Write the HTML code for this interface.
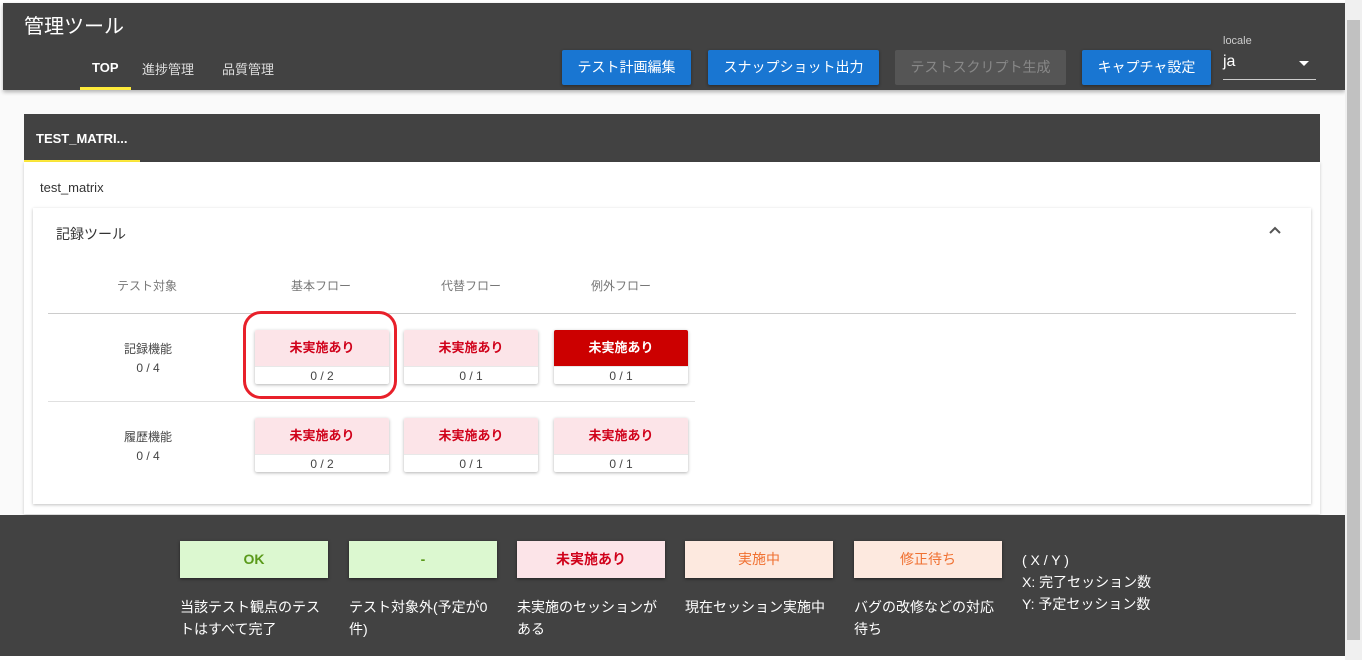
<!DOCTYPE html>
<html><head><meta charset="utf-8"><style>
*{box-sizing:border-box;margin:0;padding:0}
body{width:1362px;height:660px;overflow:hidden;background:#fff;font-family:"Liberation Sans","Noto Sans CJK JP",sans-serif;position:relative}
.a{position:absolute}
.hdr{left:3px;top:3px;width:1342px;height:87px;background:#424242;box-shadow:0 2px 4px rgba(0,0,0,.3)}
.btn{position:absolute;top:50px;height:35px;background:#1976d2;color:#fff;font-size:14px;line-height:35px;text-align:center;border-radius:2px;box-shadow:0 1px 3px rgba(0,0,0,.4)}
.cell{position:absolute;width:134px;height:54px;background:#fff;box-shadow:0 1px 3px rgba(0,0,0,.3);border-radius:2px;overflow:hidden}
.cell .t{height:36px;background:#fce4e8;color:#d0021b;font-size:13px;font-weight:bold;line-height:36px;text-align:center}
.cell .b{height:18px;line-height:18px;text-align:center;font-size:12px;color:#444;border-top:1px solid #e8e8e8}
.lg{position:absolute;top:541px;width:148px;height:37px;line-height:37px;text-align:center;font-size:14px;box-shadow:0 1px 3px rgba(0,0,0,.5)}
.ds{position:absolute;top:596px;width:152px;color:#fff;font-size:14px;line-height:22px}
</style></head><body>
<div class="a" style="left:0;top:90px;width:1345px;height:425px;background:#fafafa"></div>
<div class="a hdr"></div>
<div class="a" style="left:24px;top:10px;color:#fff;font-size:20px">管理ツール</div>
<div class="a" style="left:92px;top:60px;color:#fff;font-size:13px;font-weight:bold">TOP</div>
<div class="a" style="left:80px;top:87px;width:51px;height:3px;background:#ffeb3b"></div>
<div class="a" style="left:142px;top:59px;color:#ddd;font-size:13px">進捗管理</div>
<div class="a" style="left:222px;top:59px;color:#ddd;font-size:13px">品質管理</div>
<div class="btn" style="left:562px;width:129px">テスト計画編集</div>
<div class="btn" style="left:708px;width:171px">スナップショット出力</div>
<div class="btn" style="left:895px;width:171px;background:#555;color:#888;box-shadow:none">テストスクリプト生成</div>
<div class="btn" style="left:1082px;width:129px">キャプチャ設定</div>
<div class="a" style="left:1223px;top:35px;color:#ccc;font-size:11px">locale</div>
<div class="a" style="left:1223px;top:53px;color:#fff;font-size:16px">ja</div>
<div class="a" style="left:1299px;top:61px;width:0;height:0;border-left:5px solid transparent;border-right:5px solid transparent;border-top:5px solid #fff"></div>
<div class="a" style="left:1223px;top:79px;width:93px;height:1px;background:#ccc"></div>

<div class="a" style="left:24px;top:114px;width:1296px;height:48px;background:#424242"></div>
<div class="a" style="left:36px;top:131px;color:#fff;font-size:13px;font-weight:bold">TEST_MATRI...</div>
<div class="a" style="left:24px;top:160px;width:116px;height:2px;background:#ffeb3b"></div>
<div class="a" style="left:24px;top:162px;width:1296px;height:352px;background:#fff;box-shadow:0 1px 3px rgba(0,0,0,.2)"></div>
<div class="a" style="left:40px;top:180px;color:#333;font-size:13px">test_matrix</div>
<div class="a" style="left:33px;top:208px;width:1278px;height:296px;background:#fff;box-shadow:0 1px 3px rgba(0,0,0,.25)"></div>
<div class="a" style="left:56px;top:224px;color:#333;font-size:14px">記録ツール</div>
<svg class="a" style="left:1268px;top:225px" width="14" height="10"><path d="M2 8L7 3L12 8" stroke="#555" stroke-width="2" fill="none"/></svg>
<div class="a" style="left:117px;top:277px;color:#777;font-size:12px">テスト対象</div>
<div class="a" style="left:291px;top:277px;color:#777;font-size:12px">基本フロー</div>
<div class="a" style="left:441px;top:277px;color:#777;font-size:12px">代替フロー</div>
<div class="a" style="left:591px;top:277px;color:#777;font-size:12px">例外フロー</div>
<div class="a" style="left:48px;top:313px;width:1248px;height:1px;background:#ccc"></div>
<div class="a" style="left:48px;top:401px;width:647px;height:1px;background:#e0e0e0"></div>
<div class="a" style="left:98px;top:340px;width:100px;text-align:center;color:#444;font-size:12px;line-height:19px">記録機能<br>0 / 4</div>
<div class="a" style="left:98px;top:428px;width:100px;text-align:center;color:#444;font-size:12px;line-height:19px">履歴機能<br>0 / 4</div>
<div class="cell" style="left:255px;top:330px"><div class="t">未実施あり</div><div class="b">0 / 2</div></div>
<div class="cell" style="left:404px;top:330px"><div class="t">未実施あり</div><div class="b">0 / 1</div></div>
<div class="cell" style="left:554px;top:330px"><div class="t" style="background:#cc0000;color:#fff">未実施あり</div><div class="b">0 / 1</div></div>
<div class="cell" style="left:255px;top:418px"><div class="t">未実施あり</div><div class="b">0 / 2</div></div>
<div class="cell" style="left:404px;top:418px"><div class="t">未実施あり</div><div class="b">0 / 1</div></div>
<div class="cell" style="left:554px;top:418px"><div class="t">未実施あり</div><div class="b">0 / 1</div></div>
<div class="a" style="left:243px;top:311px;width:154px;height:88px;border:3px solid #e8202a;border-radius:18px"></div>

<div class="a" style="left:0;top:515px;width:1345px;height:141px;background:#424242"></div>
<div class="lg" style="left:180px;background:#dcf8d0;color:#5a9a1a;font-weight:bold">OK</div>
<div class="lg" style="left:349px;background:#dcf8d0;color:#5a9a1a;font-weight:bold">-</div>
<div class="lg" style="left:517px;background:#fce4e8;color:#d0021b;font-weight:bold">未実施あり</div>
<div class="lg" style="left:685px;background:#fde9df;color:#f07030">実施中</div>
<div class="lg" style="left:854px;background:#fde9df;color:#f07030">修正待ち</div>
<div class="ds" style="left:180px">当該テスト観点のテストはすべて完了</div>
<div class="ds" style="left:349px">テスト対象外(予定が0件)</div>
<div class="ds" style="left:517px">未実施のセッションがある</div>
<div class="ds" style="left:685px">現在セッション実施中</div>
<div class="ds" style="left:854px">バグの改修などの対応待ち</div>
<div class="a" style="left:1022px;top:549px;color:#fff;font-size:14px;line-height:22px">( X / Y )<br>X: 完了セッション数<br>Y: 予定セッション数</div>

<div class="a" style="left:1345px;top:0;width:17px;height:660px;background:#f0f0f0"></div>
<div class="a" style="left:1347px;top:20px;width:13px;height:620px;background:#c1c1c1"></div>
</body></html>
